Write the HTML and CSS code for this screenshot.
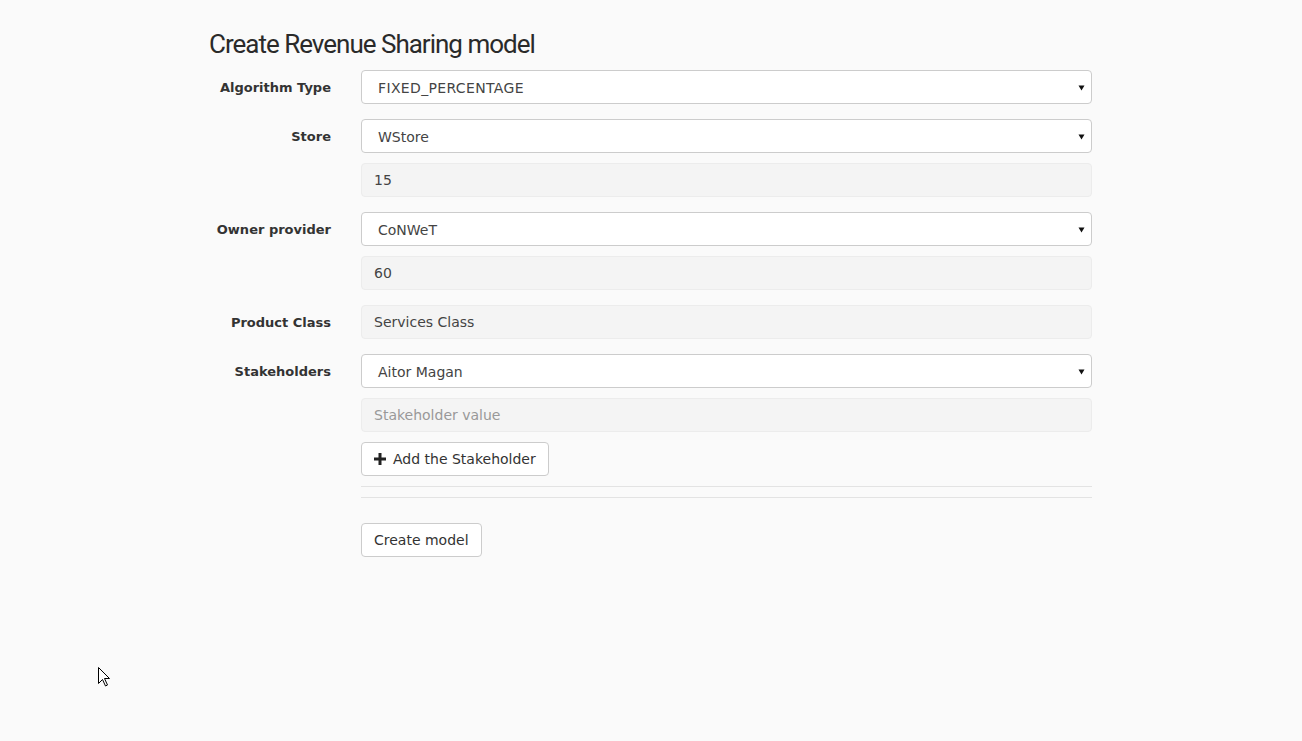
FILE: index.html
```html
<!DOCTYPE html>
<html>
<head>
<meta charset="utf-8">
<title>Create Revenue Sharing model</title>
<link rel="stylesheet" href="styles.css">
</head>
<body>
<div class="page">
  <h1 class="title">Create Revenue Sharing model</h1>
  <form class="form">
    <div class="group">
      <label class="label">Algorithm Type</label>
      <div class="controls">
        <div class="select"><span class="wide">FIXED_PERCENTAGE</span><svg class="caret" width="7" height="6" viewBox="0 0 7 6"><path d="M0.5 0.5H6.5L3.5 5.5Z" fill="#111"/></svg></div>
      </div>
    </div>
    <div class="group">
      <label class="label">Store</label>
      <div class="controls">
        <div class="select"><span>WStore</span><svg class="caret" width="7" height="6" viewBox="0 0 7 6"><path d="M0.5 0.5H6.5L3.5 5.5Z" fill="#111"/></svg></div>
        <div class="input">15</div>
      </div>
    </div>
    <div class="group">
      <label class="label">Owner provider</label>
      <div class="controls">
        <div class="select"><span>CoNWeT</span><svg class="caret" width="7" height="6" viewBox="0 0 7 6"><path d="M0.5 0.5H6.5L3.5 5.5Z" fill="#111"/></svg></div>
        <div class="input">60</div>
      </div>
    </div>
    <div class="group">
      <label class="label">Product Class</label>
      <div class="controls">
        <div class="input">Services Class</div>
      </div>
    </div>
    <div class="group">
      <label class="label">Stakeholders</label>
      <div class="controls">
        <div class="select"><span>Aitor Magan</span><svg class="caret" width="7" height="6" viewBox="0 0 7 6"><path d="M0.5 0.5H6.5L3.5 5.5Z" fill="#111"/></svg></div>
        <div class="input placeholder">Stakeholder value</div>
        <div class="btn-row">
          <button type="button" class="btn"><svg class="plus" width="12" height="12" viewBox="0 0 12 12"><path d="M4.5 0H7.5V4.5H12V7.5H7.5V12H4.5V7.5H0V4.5H4.5Z" fill="#222"/></svg>Add the Stakeholder</button>
        </div>
      </div>
    </div>
    <div class="group footer">
      <div class="label"></div>
      <div class="controls">
        <hr class="rule">
        <div class="submit-row"><button type="button" class="btn">Create model</button></div>
      </div>
    </div>
  </form>
</div>
<svg class="cursor" width="13" height="20" viewBox="0 0 13 20"><path d="M0.5 0.5V16.5L4.5 12.5L7.5 19L9.5 18L6.5 11.5H11.5Z" fill="#fff" stroke="#000" stroke-width="1"/></svg>
</body>
</html>
```
FILE: styles.css
```css
html, body {
  margin: 0;
  padding: 0;
  background: #fafafa;
}
body {
  font-family: "DejaVu Sans", Verdana, sans-serif;
  font-size: 14px;
  color: #333;
  min-height: 741px;
  position: relative;
}
.page {
  width: 912px;
  margin-left: 194px;
  padding-top: 28px;
}
.title {
  font-family: Roboto, "Liberation Sans", sans-serif;
  font-weight: 400;
  font-size: 26px;
  line-height: 32px;
  color: #2a2a2a;
  margin: 0 0 10px 0;
  padding: 0 15px;
  letter-spacing: -1px;
}
.form {
  margin: 0;
}
.group {
  display: grid;
  grid-template-columns: 152px 760px;
  margin-bottom: 15px;
}
.label {
  padding: 10px 15px 0 15px;
  text-align: right;
  font-weight: bold;
  font-size: 13px;
  color: #333;
}
.controls {
  padding: 0 14px 0 15px;
  display: flex;
  flex-direction: column;
  gap: 10px;
}
.select, .input {
  box-sizing: border-box;
  height: 34px;
  border-radius: 4px;
  display: flex;
  align-items: center;
  font-size: 14px;
}
.select {
  background: #fff;
  border: 1px solid #ccc;
  padding: 2px 6px 0 16px;
  justify-content: space-between;
  color: #444;
}
.wide {
  letter-spacing: 0.35px;
}
.input {
  background: #f4f4f4;
  border: 1px solid #ececec;
  padding: 0 12px;
  color: #444;
}
.placeholder {
  color: #999;
}
.btn-row, .submit-row {
  display: flex;
}
.btn {
  box-sizing: border-box;
  height: 34px;
  border: 1px solid #ccc;
  border-radius: 4px;
  background: #fff;
  font-family: "DejaVu Sans", Verdana, sans-serif;
  font-size: 14px;
  color: #333;
  padding: 0 12px;
  display: flex;
  align-items: center;
  gap: 7px;
}
.plus {
  display: block;
}
.footer .controls {
  gap: 0;
}
.rule {
  border: 0;
  border-top: 1px solid #e3e3e3;
  border-bottom: 1px solid #e3e3e3;
  height: 10px;
  margin: 0 0 25px 0;
  box-sizing: content-box;
}
.footer {
  margin-top: -5px;
}
.cursor {
  position: absolute;
  left: 98px;
  top: 667px;
}
```
